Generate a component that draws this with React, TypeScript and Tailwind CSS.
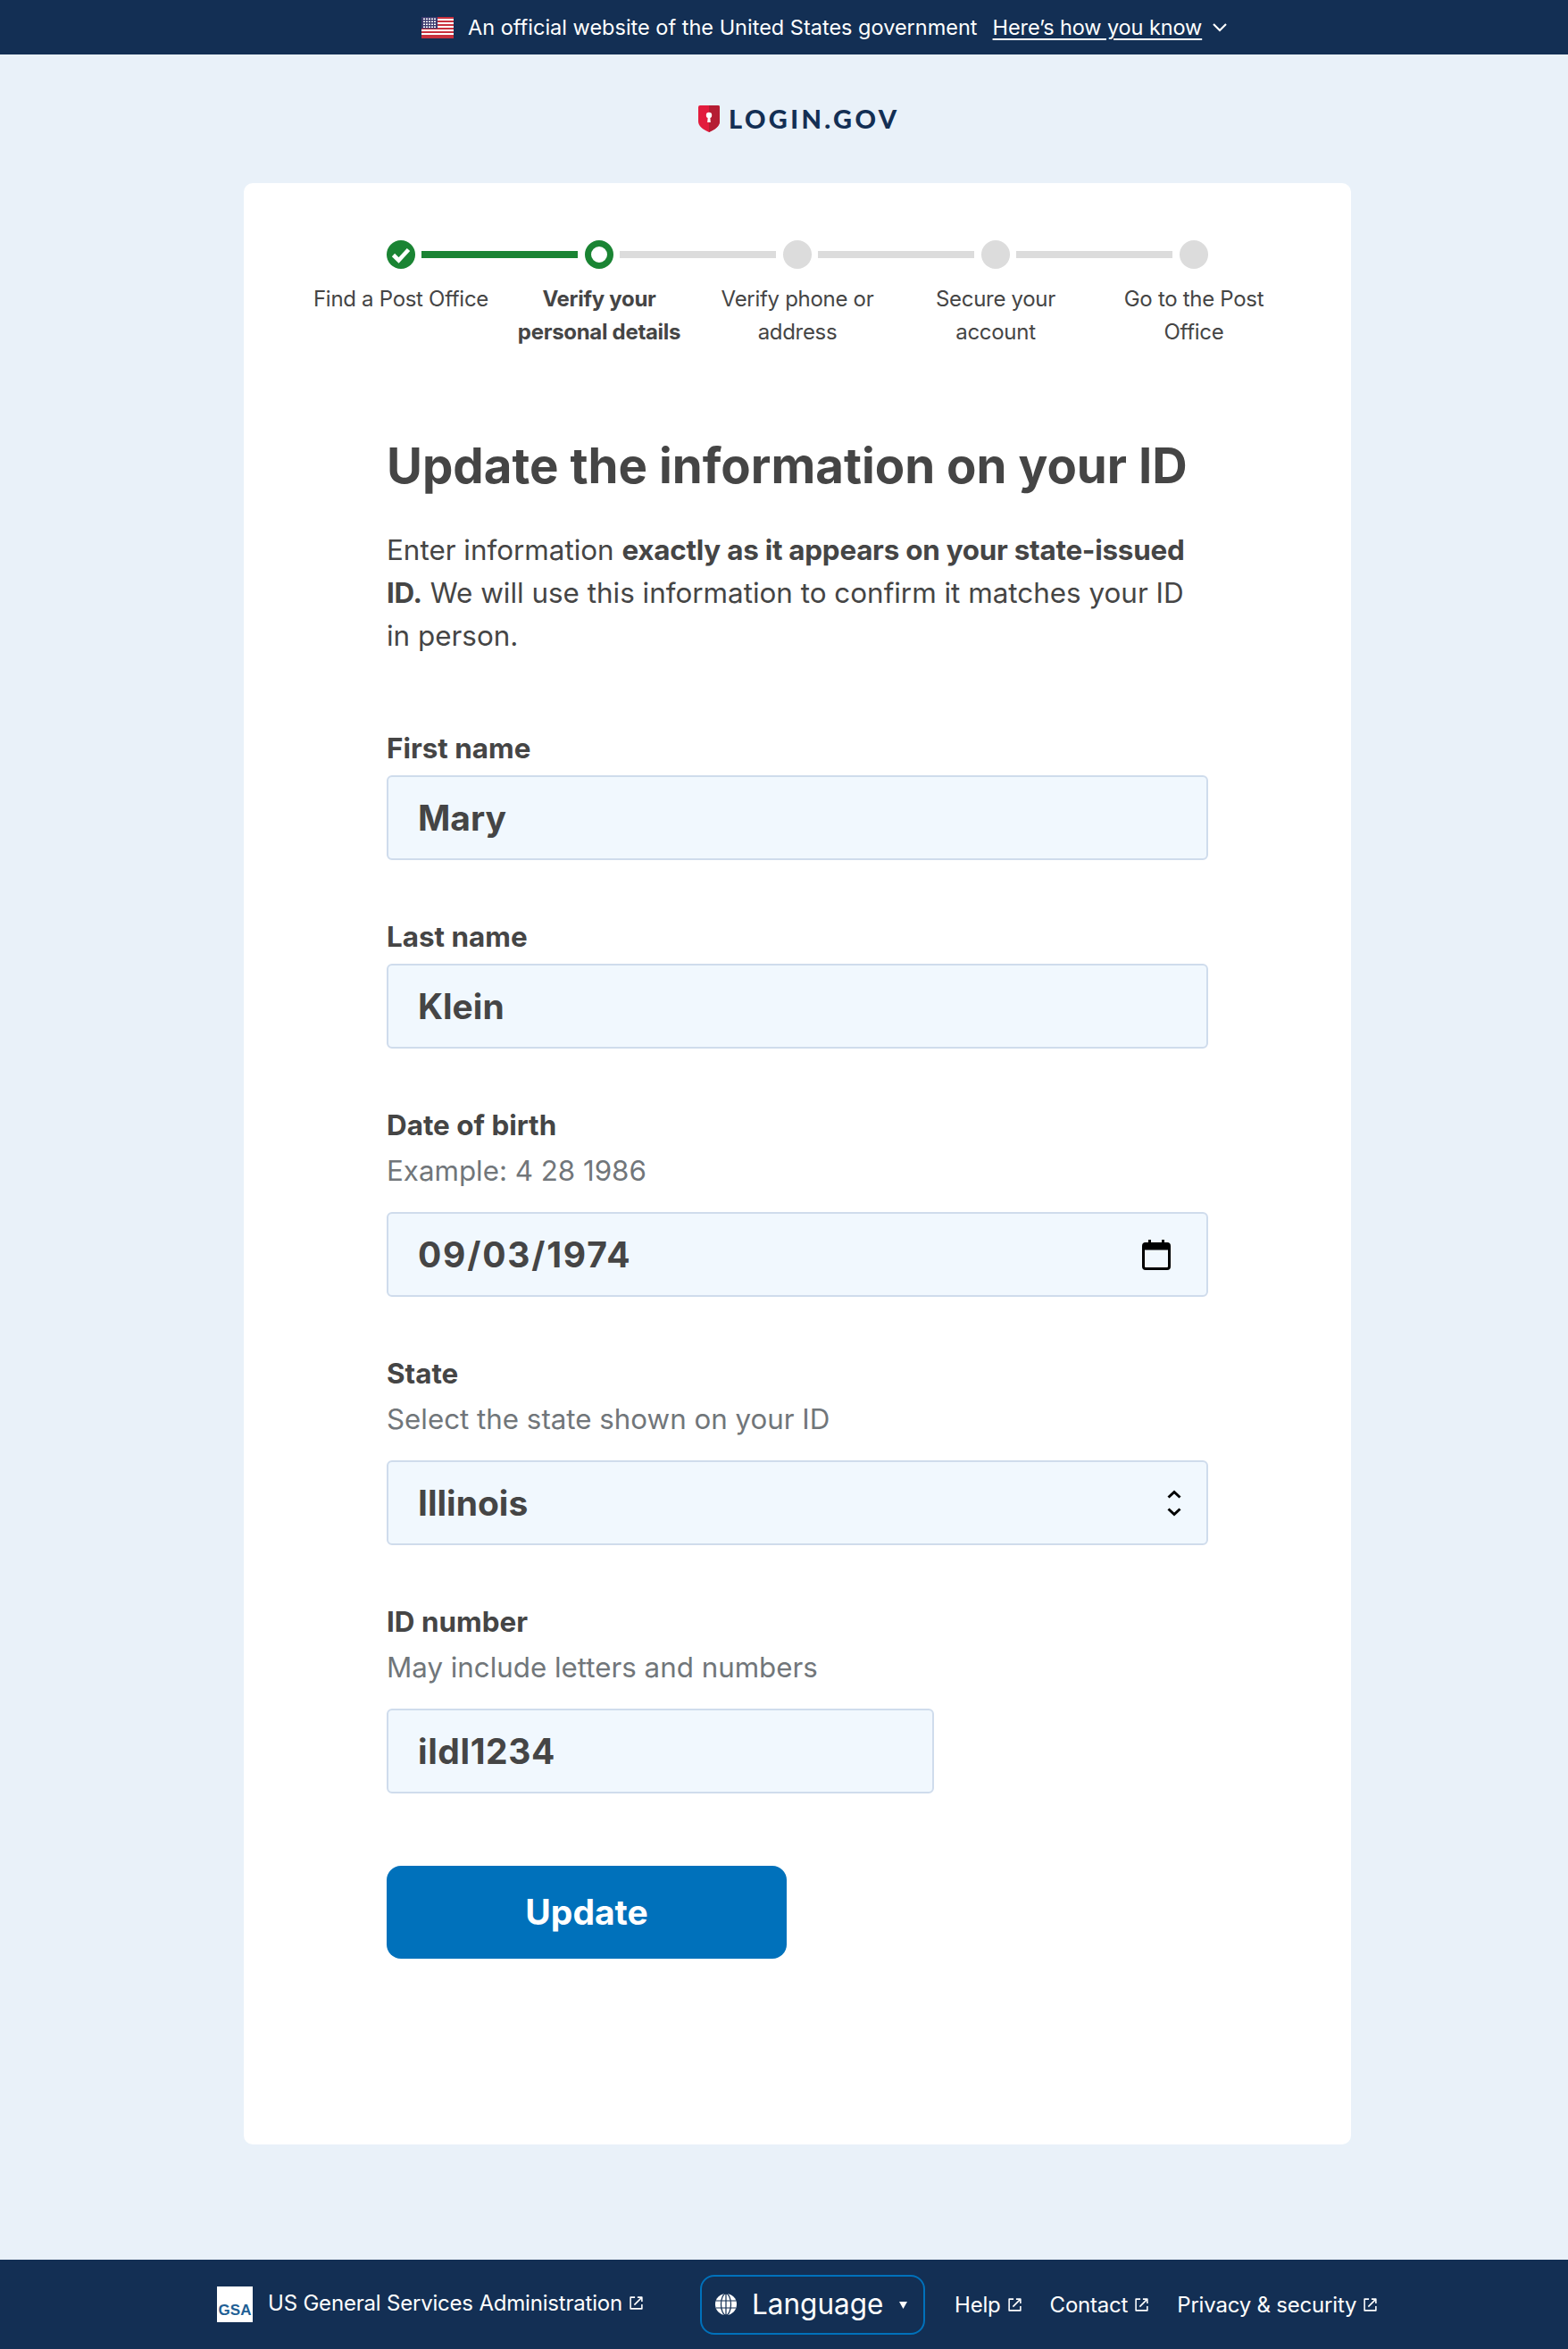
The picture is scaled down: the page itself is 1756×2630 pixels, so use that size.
import type { ReactNode } from "react";

const steps = [
  { label: "Find a Post Office", state: "done" },
  { label: "Verify your personal details", state: "current" },
  { label: "Verify phone or address", state: "todo" },
  { label: "Secure your account", state: "todo" },
  { label: "Go to the Post Office", state: "todo" }
];

function ExternalIcon({ className }: { className?: string }) {
  return (
    <svg className={className} viewBox="0 0 24 24" fill="none" stroke="currentColor" strokeWidth="2.2">
      <path d="M10 3H3v18h18v-7" strokeLinejoin="round" />
      <path d="M9 15 21 3M14 3h7v7" strokeLinejoin="round" />
    </svg>
  );
}

function Flag() {
  return (
    <svg width="36" height="24" viewBox="0 0 36 24" className="shrink-0">
      <rect width="36" height="24" fill="#fff" />
      {[0, 4, 8, 12, 16, 20].map((y) => (
        <rect key={y} y={y} width="36" height="2" fill="#c8313e" />
      ))}
      <rect y="22" width="36" height="2" fill="#c8313e" />
      <rect width="18" height="13" fill="#3c3b6e" />
      {[2, 5, 8, 11].map((y) =>
        [2, 5, 8, 11, 14].map((x) => <rect key={`${x}-${y}`} x={x} y={y - 0.5} width="2" height="1.5" fill="#fff" />)
      )}
    </svg>
  );
}

function Shield() {
  return (
    <svg width="24" height="30" viewBox="0 0 24 30">
      <path d="M2 0h20a2 2 0 0 1 2 2v16c0 5-5 9-12 12C5 27 0 23 0 18V2a2 2 0 0 1 2-2z" fill="#e21c3d" />
      <path d="M12 0h10a2 2 0 0 1 2 2v16c0 5-5 9-12 12z" fill="#b51d33" />
      <circle cx="12" cy="11" r="3.2" fill="#fff" />
      <path d="M10.8 12h2.4l.6 7h-3.6z" fill="#fff" />
    </svg>
  );
}

function StepDot({ state }: { state: string }) {
  if (state === "done") {
    return (
      <svg width="32" height="32" viewBox="0 0 32 32" className="shrink-0">
        <circle cx="16" cy="16" r="16" fill="#1a8433" />
        <path d="M7.5 16.5 13.5 22.5 24.5 10.5" fill="none" stroke="#fff" strokeWidth="4.6" />
      </svg>
    );
  }
  if (state === "current") {
    return <div className="size-8 shrink-0 rounded-full border-[7px] border-[#1a8433] bg-white" />;
  }
  return <div className="size-8 shrink-0 rounded-full bg-[#dcdcdc]" />;
}

function Field({
  label,
  hint,
  width = "w-[920px]",
  value,
  valueClass = "",
  icon
}: {
  label: string;
  hint?: string;
  width?: string;
  value: string;
  valueClass?: string;
  icon?: ReactNode;
}) {
  return (
    <div className="mb-[62px]">
      <div className={`text-[31.4px] leading-[48px] font-bold text-[#454545] ${hint ? "mb-[3px]" : "mb-[6px]"}`}>
        {label}
      </div>
      {hint && <div className="mb-[22px] text-[31.3px] leading-[48px] text-[#71767a]">{hint}</div>}
      <div
        className={`${width} flex h-[95px] items-center justify-between rounded-[6px] border-2 border-[#cfdcec] bg-[#f1f8fe] pl-[33px] pr-[37px]`}
      >
        <span className={`mt-[2px] text-[39px] font-bold text-[#454545] ${valueClass}`}>{value}</span>
        {icon}
      </div>
    </div>
  );
}

function CalendarIcon() {
  return (
    <svg width="32" height="34" viewBox="0 0 32 34" className="mr-[3px]">
      <path d="M7 0h3v4H7zM22 0h3v4h-3z" fill="#000" />
      <rect x="1.5" y="4.5" width="29" height="28" rx="2.5" fill="none" stroke="#000" strokeWidth="3" />
      <rect x="1.5" y="3.5" width="29" height="8" fill="#000" rx="2" />
    </svg>
  );
}

function SortIcon() {
  return (
    <svg width="16" height="30" viewBox="0 0 16 30" className="mr-[-9px]">
      <path d="M1.5 8.5 8 2.5 14.5 8.5M1.5 21.5 8 27.5 14.5 21.5" fill="none" stroke="#000" strokeWidth="3" />
    </svg>
  );
}

function FootLink({ children }: { children: string }) {
  return (
    <span className="flex items-center gap-[7px] text-[24px] tracking-[-0.2px]">
      {children}
      <ExternalIcon className="size-[17px]" />
    </span>
  );
}

export default function App() {
  return (
    <div className="flex min-h-[2630px] flex-col bg-[#e9f1f9] font-['Inter',sans-serif] text-[#454545]">
      <div className="flex h-[61px] items-center bg-[#132f54] pl-[472px] text-[23.5px] text-white">
        <Flag />
        <span className="ml-[16px]">An official website of the United States government</span>
        <span className="ml-[17px] tracking-[-0.1px] underline underline-offset-[4px]">Here’s how you know</span>
        <svg width="18" height="11" viewBox="0 0 18 11" className="ml-[11px]">
          <path d="M2 2l7 7 7-7" fill="none" stroke="#fff" strokeWidth="2.2" />
        </svg>
      </div>

      <div className="ml-[782px] flex h-[144px] items-center gap-[10px]">
        <Shield />
        <span className="font-['Lato',sans-serif] text-[29px] font-black tracking-[3.4px] text-[#132f54]">LOGIN.GOV</span>
      </div>

      <main className="ml-[273px] flex h-[2196px] w-[1240px] flex-col rounded-[10px] bg-white pt-[64px]">
        <div className="mx-auto flex w-[1110px]">
          {steps.map((step, i) => (
            <div key={step.label} className="flex w-[222px] flex-col items-center">
              <div className="relative flex w-full justify-center">
                <StepDot state={step.state} />
                {i < steps.length - 1 && (
                  <div
                    className={`absolute top-[12px] left-[134px] h-[8px] w-[175px] ${
                      step.state === "done" ? "bg-[#1a8433]" : "bg-[#dcdcdc]"
                    }`}
                  />
                )}
              </div>
              <div
                className={`mt-[15px] w-[208px] text-center text-[24px] leading-[37px] tracking-[-0.3px] text-[#454545] ${
                  step.state === "current" ? "font-bold" : ""
                }`}
              >
                {step.label}
              </div>
            </div>
          ))}
        </div>

        <div className="mx-auto mt-[95px] w-[920px]">
          <h1 className="text-[54.6px] leading-[72px] font-bold text-[#454545]">Update the information on your ID</h1>
          <p className="mt-[35px] mb-[78px] max-w-[910px] text-[31.4px] leading-[48px] text-[#454545]">
            Enter information{" "}
            <strong className="font-bold tracking-[-0.25px]">exactly as it appears on your state-issued ID.</strong> We
            will use this information to confirm it matches your ID in person.
          </p>

          <Field label="First name" value="Mary" />
          <Field label="Last name" value="Klein" />
          <Field
            label="Date of birth"
            hint="Example: 4 28 1986"
            value="09/03/1974"
            valueClass="tracking-[1.8px]"
            icon={<CalendarIcon />}
          />
          <Field label="State" hint="Select the state shown on your ID" value="Illinois" icon={<SortIcon />} />
          <Field
            label="ID number"
            hint="May include letters and numbers"
            value="ildl1234"
            valueClass="tracking-[0.6px]"
            width="w-[613px]"
          />

          <button className="mt-[81px] block h-[104px] w-[448px] rounded-[16px] bg-[#0071bb] text-[39px] font-bold text-white">
            Update
          </button>
        </div>
      </main>

      <footer className="mt-auto flex h-[100px] items-center bg-[#132f54] pl-[243px] text-white">
        <div className="flex w-[541px] items-center">
          <div className="flex h-[40px] w-[40px] items-end justify-center bg-white pb-[4px] font-['Liberation_Sans',sans-serif] text-[17px] leading-[18px] font-bold text-[#1f5f95]">
            GSA
          </div>
          <span className="mt-[-3px] ml-[17px]">
            <FootLink>US General Services Administration</FootLink>
          </span>
        </div>
        <div className="flex h-[67px] w-[252px] items-center rounded-[16px] border-[2px] border-[#0071bb] pl-[15px] text-[31.5px]">
          <svg width="24" height="24" viewBox="0 0 24 24" fill="none">
            <circle cx="12" cy="12" r="12" fill="#fff" />
            <g stroke="#132f54" strokeWidth="1.2">
              <path d="M1 8h22M1 16h22M12 0v24" />
              <ellipse cx="12" cy="12" rx="5.5" ry="12" />
            </g>
          </svg>
          <span className="ml-[17px]">Language</span>
          <svg width="9" height="9" viewBox="0 0 9 9" className="ml-[18px]">
            <path d="M0 1h9L4.5 9z" fill="#fff" />
          </svg>
        </div>
        <div className="ml-[33px] flex gap-[31px] pt-[1px]">
          <FootLink>Help</FootLink>
          <FootLink>Contact</FootLink>
          <FootLink>Privacy &amp; security</FootLink>
        </div>
      </footer>
    </div>
  );
}
